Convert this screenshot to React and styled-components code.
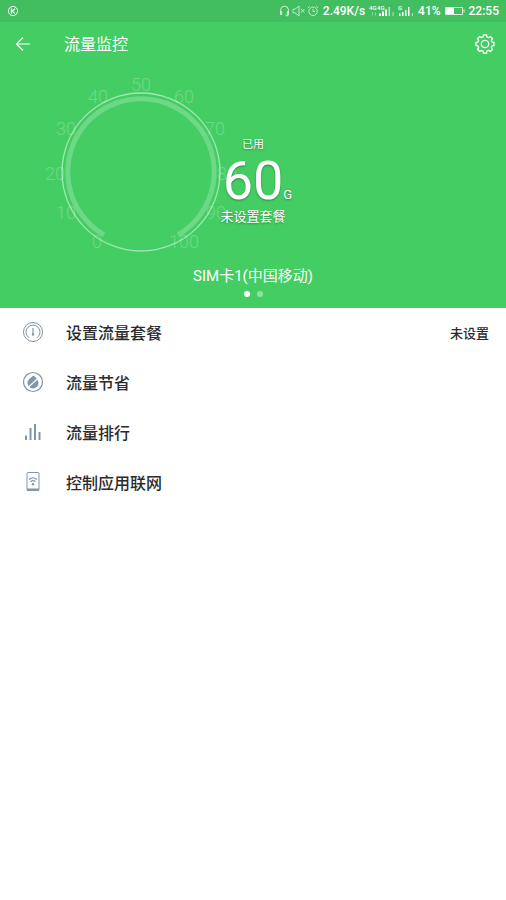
import React, { useState } from "react"
import styled, { createGlobalStyle, ThemeProvider } from "styled-components"

const theme = {
  primary: "#44cd63",
  status: "#42be60",
  ink: "#2b2b2b",
  icon: "#8295a6",
}

const GlobalStyle = createGlobalStyle`
  body {
    margin: 0;
    background: white;
    font-family: Roboto, "Noto Sans CJK SC", sans-serif;
  }

  button {
    font: inherit;
    color: inherit;
    background: none;
    border: none;
    padding: 0;
    cursor: pointer;
  }

  svg {
    display: block;
    flex: none;
  }
`

const Hero = styled.section`
  background: ${(p) => p.theme.primary};
  color: white;
`

const StatusBar = styled.div`
  display: flex;
  align-items: center;
  justify-content: space-between;
  height: 22px;
  padding: 0 7px;
  box-sizing: border-box;
  background: ${(p) => p.theme.status};
  font-size: 12px;
  font-weight: 500;
  line-height: 22px;
`

const StatusGroup = styled.div`
  display: flex;
  align-items: center;
  gap: ${(p) => p.$gap}px;
`

const AppBar = styled.header`
  display: flex;
  align-items: center;
  height: 44px;
  padding: 0 11px 0 15px;
`

const IconButton = styled.button`
  display: flex;
`

const Title = styled.h1`
  flex: 1;
  margin: 0 0 0 33px;
  padding-top: 2px;
  font-size: 16px;
  font-weight: 400;
  line-height: 24px;
`

const Usage = styled.div`
  display: grid;
  grid-template-columns: 100%;
  height: 198px;

  > * {
    grid-area: 1 / 1;
  }
`

const GaugeHolder = styled.div`
  padding-left: 41px;
`

const Readout = styled.div`
  display: flex;
  flex-direction: column;
  align-items: center;
  padding-top: 71px;
  text-shadow: 0 1px 2px rgba(0, 0, 0, 0.35);
`

const Caption = styled.div`
  font-size: ${(p) => (p.$small ? 11 : 13)}px;
  line-height: 16px;
`

const Amount = styled.div`
  display: grid;
  grid-template-columns: 1fr auto 1fr;
  align-items: baseline;
  font-size: 54px;
  line-height: 56px;
`

const Unit = styled.span`
  grid-column: 3;
  font-size: 13px;
  line-height: 16px;
`

const Value = styled.span`
  grid-column: 2;
`

const SimName = styled.div`
  text-align: center;
  font-size: 15px;
  line-height: 24px;
`

const Dots = styled.div`
  display: flex;
  justify-content: center;
  gap: 7px;
  padding: 3px 0 11px;
`

const Dot = styled.button`
  && {
    width: 6px;
    height: 6px;
    border-radius: 50%;
    background: white;
    opacity: ${(p) => (p.$active ? 1 : 0.4)};
  }
`

const Menu = styled.nav`
  color: ${(p) => p.theme.ink};
`

const MenuItem = styled.a`
  display: flex;
  align-items: center;
  height: 50px;
  padding: 0 17px 2px 22px;
  box-sizing: border-box;
  color: inherit;
  text-decoration: none;

  svg {
    color: ${(p) => p.theme.icon};
  }
`

const Label = styled.span`
  flex: 1;
  margin-left: 22px;
  font-size: 16px;
  font-weight: 500;
`

const Hint = styled.span`
  font-size: 13px;
  font-weight: 500;
`

const Line = ({ w, h, box, children, ...props }) => (
  <svg
    width={w}
    height={h}
    viewBox={box || `0 0 ${w} ${h}`}
    fill="none"
    stroke="currentColor"
    aria-hidden="true"
    {...props}
  >
    {children}
  </svg>
)

const KIcon = () => (
  <Line w={12} h={12}>
    <circle cx="6" cy="6" r="4.6" />
    <path d="M4.4 3.6v4.8M8 3.7L5 6l3 2.4" strokeWidth="1.1" />
  </Line>
)

const HeadsetIcon = () => (
  <Line w={11} h={12} strokeWidth="0.9" opacity="0.85">
    <path d="M1.5 8V5.2a4 4 0 0 1 8 0V8M1.5 6.5h1.2v3H1.5zM8.3 6.5h1.2v3H8.3zM9 9.5v1.2H6.5" />
  </Line>
)

const MuteIcon = () => (
  <Line w={13} h={12} strokeWidth="0.8" opacity="0.85">
    <path d="M1 4.2h2L7 1v10L3 7.8H1zM9 4l3.4 3.6M12.4 4L9 7.6" />
  </Line>
)

const AlarmIcon = () => (
  <Line w={12} h={12} strokeWidth="0.8" opacity="0.85">
    <circle cx="6" cy="6.3" r="4.2" />
    <path d="M6 4v2.5h2M1 2.8L2.8 1.2M11 2.8L9.2 1.2" />
  </Line>
)

const DualSignalIcon = () => (
  <svg width="25" height="12" viewBox="0 0 25 12" fill="currentColor" aria-hidden="true">
    <text x="0" y="5" fontSize="6">4G</text>
    <text x="8" y="5" fontSize="6">4G</text>
    <path d="M3 7.5h1v3H3zM6 7.5h1v3H6z" opacity="0.4" />
    <path d="M10 8.5h2V11h-2zM13 6.5h2V11h-2zM16 4.5h2V11h-2z" />
    <path d="M19.5 2H21v9h-1.5zM23.5 7h1v4h-1z" opacity="0.6" />
  </svg>
)

const SignalIcon = () => (
  <svg width="16" height="12" viewBox="0 0 16 12" fill="currentColor" aria-hidden="true">
    <text x="0" y="5" fontSize="6">G</text>
    <path d="M1 8.5h1.5V11H1zM4 7h1.5v4H4zM7 5h1.5v6H7zM10 2h1.5v9H10z" />
    <path d="M14 8h1v3h-1z" opacity="0.6" />
  </svg>
)

const BatteryIcon = () => (
  <Line w={20} h={10}>
    <path d="M0.5 1.5h17v7h-17zM19 3.5v3" opacity="0.8" />
    <path d="M1 2h8v6H1z" fill="currentColor" stroke="none" />
  </Line>
)

const BackIcon = () => (
  <Line w={16} h={16} strokeWidth="1.2">
    <path d="M15 8H1.5M8 1.5L1.5 8L8 14.5" />
  </Line>
)

// eight teeth, four points each: [angle offset in degrees, radius]
const tooth = [
  [-15, 7.3],
  [-10, 9.2],
  [10, 9.2],
  [15, 7.3],
]

const gearPoints = Array.from({ length: 8 }, (_, i) =>
  tooth.map(([offset, r]) => {
    const a = ((i * 45 + offset) * Math.PI) / 180
    return `${10 + r * Math.cos(a)},${10 + r * Math.sin(a)}`
  })
)
  .flat()
  .join(" ")

const GearIcon = () => (
  <Line w={20} h={20} strokeWidth="1.3" strokeLinejoin="round">
    <circle cx="10" cy="10" r="3.7" />
    <polygon points={gearPoints} />
  </Line>
)

const PlanIcon = () => (
  <Line w={22} h={22}>
    <circle cx="11" cy="11" r="9.5" />
    <path d="M7 16.8a7 7 0 1 1 8 0" />
    <path d="M11 7v6" strokeWidth="1.2" />
    <circle cx="11" cy="13.5" r="1.2" fill="currentColor" stroke="none" />
  </Line>
)

const SaverIcon = () => (
  <Line w={22} h={22}>
    <circle cx="11" cy="11" r="9.5" strokeWidth="1.2" />
    <path
      d="M11.5 4.5c2.4 2 5 4.3 5 7.4a5.500 5.500 0 0 1-11 0c0-3.100 3.500-5.400 6-7.400z"
      fill="currentColor"
      stroke="none"
    />
    <path d="M6 16.500L17.500 6" stroke="white" strokeWidth="1.200" />
  </Line>
)

const RankIcon = () => (
  <Line w={22} h={22} strokeWidth="2">
    <path d="M4 19v-4.500M8.500 19V7M13 19V3M17.500 19v-8" />
  </Line>
)

const PhoneIcon = () => (
  <Line w={22} h={22}>
    <rect x="5" y="1.5" width="12" height="18" rx="1" />
    <path d="M5 18.5h12" strokeWidth="2" />
    <path d="M7 8.5q4-3.5 8 0M8.5 10.8q2.5-2.2 5 0" strokeWidth="1.2" />
    <circle cx="11" cy="13.2" r="1.2" fill="currentColor" stroke="none" />
  </Line>
)

const marks = [
  [0, 97, 242],
  [10, 66, 213],
  [20, 55, 174],
  [30, 66, 129],
  [40, 98, 97],
  [50, 141, 85],
  [60, 184, 97],
  [70, 215, 129],
  [80, 227, 174],
  [90, 216, 213],
  [100, 184, 242],
]

const Gauge = () => (
  <svg width="200" height="198" viewBox="41 66 200 198" fill="none" stroke="white">
    <g fill="white" stroke="none" opacity="0.22" fontSize="18" fontWeight="300" textAnchor="middle">
      {marks.map(([mark, x, y]) => (
        <text key={mark} x={x} y={y + 6}>
          {mark}
        </text>
      ))}
    </g>
    <circle cx="141" cy="172" r="79" strokeWidth="1.3" opacity="0.5" />
    <path d="M104 235A73.200 73.200 0 1 1 178 235" strokeWidth="5" opacity="0.22" />
  </svg>
)

const items = [
  { label: "设置流量套餐", icon: PlanIcon, hint: "未设置" },
  { label: "流量节省", icon: SaverIcon },
  { label: "流量排行", icon: RankIcon },
  { label: "控制应用联网", icon: PhoneIcon },
]

const App = () => {
  const [sim, setSim] = useState(0)

  return (
    <ThemeProvider theme={theme}>
      <GlobalStyle />
      <Hero>
        <StatusBar>
          <KIcon />
          <StatusGroup $gap={4}>
            <StatusGroup $gap={2}>
              <HeadsetIcon />
              <MuteIcon />
              <AlarmIcon />
            </StatusGroup>
            <span>2.49K/s</span>
            <DualSignalIcon />
            <SignalIcon />
            <StatusGroup $gap={4}>
              <span>41%</span>
              <BatteryIcon />
              <span>22:55</span>
            </StatusGroup>
          </StatusGroup>
        </StatusBar>
        <AppBar>
          <IconButton aria-label="返回">
            <BackIcon />
          </IconButton>
          <Title>流量监控</Title>
          <IconButton aria-label="设置">
            <GearIcon />
          </IconButton>
        </AppBar>
        <Usage>
          <GaugeHolder>
            <Gauge />
          </GaugeHolder>
          <Readout>
            <Caption $small>已用</Caption>
            <Amount>
              <Value>60</Value>
              <Unit>G</Unit>
            </Amount>
            <Caption>未设置套餐</Caption>
          </Readout>
        </Usage>
        <SimName>SIM卡1(中国移动)</SimName>
        <Dots>
          {[0, 1].map((i) => (
            <Dot key={i} $active={sim === i} aria-label={`SIM卡${i + 1}`} onClick={() => setSim(i)} />
          ))}
        </Dots>
      </Hero>
      <Menu>
        {items.map(({ label, icon: Icon, hint }) => (
          <MenuItem key={label} href="#">
            <Icon />
            <Label>{label}</Label>
            {hint && <Hint>{hint}</Hint>}
          </MenuItem>
        ))}
      </Menu>
    </ThemeProvider>
  )
}

export default App
